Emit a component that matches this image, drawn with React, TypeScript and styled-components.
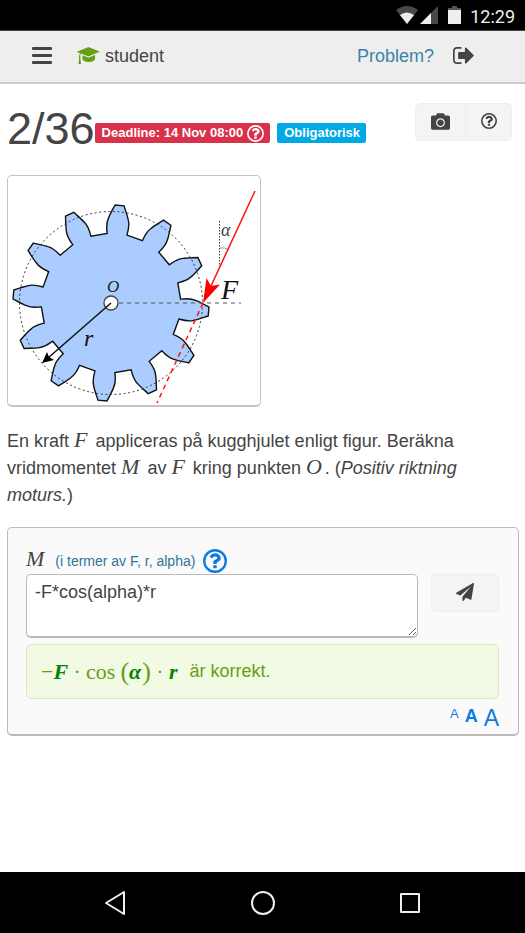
import React from "react";
import styled, { createGlobalStyle } from "styled-components";
import { FaCamera } from "react-icons/fa";

const GlobalStyle = createGlobalStyle`
  *, *::before, *::after { box-sizing: border-box; }
  body {
    margin: 0;
    background: #fff;
    color: #444;
    font-family: "Liberation Sans", Arial, sans-serif;
    font-size: 18px;
    line-height: 27px;
  }
  button, textarea { font: inherit; color: inherit; }
  svg { display: block; }
`;

const Screen = styled.div`
  min-height: 100vh;
  display: flex;
  flex-direction: column;
`;

const StatusBar = styled.div`
  display: flex;
  align-items: center;
  justify-content: flex-end;
  height: 30px;
  padding: 2px 10px 0 0;
  background: #000;
  color: #eee;
  font-family: Roboto, sans-serif;
`;

const Clock = styled.time`
  margin-left: 7px;
`;

const Header = styled.header`
  display: flex;
  align-items: center;
  justify-content: space-between;
  height: 54px;
  padding: 0 51px 0 32px;
  background: #eee;
  border-top: 1px solid #444;
  border-bottom: 2px solid #ccc;
`;

const HeaderGroup = styled.div<{ $gap: number }>`
  display: flex;
  align-items: center;
  gap: ${(p) => p.$gap}px;
`;

const PlainButton = styled.button`
  display: flex;
  padding: 0;
  border: 0;
  background: none;
  color: #444;
  cursor: pointer;
`;

const User = styled.span`
  display: flex;
  align-items: center;
  gap: 5px;
`;

const Link = styled.a`
  color: #3a84a8;
  text-decoration: none;
`;

const Main = styled.main`
  flex: 1;
  padding: 18px 6px 24px 7px;
`;

const TitleRow = styled.div`
  display: flex;
  align-items: flex-start;
  height: 56px;
  padding-right: 7px;
`;

const Counter = styled.h1`
  margin: 0;
  font-size: 45px;
  line-height: 54px;
  font-weight: 400;
`;

const Badge = styled.span<{ $color: string }>`
  display: flex;
  align-items: center;
  gap: 4px;
  height: 20px;
  margin: 21px 7px 0 0;
  padding: 0 6px 0 7px;
  border-radius: 2px;
  background: ${(p) => p.$color};
  color: #fff;
  font-size: 13px;
  font-weight: 700;
  line-height: 20px;
  white-space: nowrap;
`;

const ButtonGroup = styled.div`
  display: flex;
  margin: 1px 0 0 auto;
`;

const Button = styled.button<{ $width: number; $side?: "left" | "right" }>`
  display: flex;
  align-items: center;
  justify-content: center;
  width: ${(p) => p.$width}px;
  height: 38px;
  padding: 0 0 2px;
  border: 1px solid #eee;
  border-radius: ${(p) =>
    p.$side === "left" ? "5px 0 0 5px" : p.$side === "right" ? "0 5px 5px 0" : "5px"};
  border-left-width: ${(p) => (p.$side === "right" ? 0 : 1)}px;
  background: #f4f4f4;
  color: #444;
  cursor: pointer;
`;

const Figure = styled.figure`
  width: fit-content;
  margin: 17px 0 21px;
  border: 1px solid #c4c4c4;
  border-bottom-width: 2px;
  border-radius: 5px;
  overflow: hidden;
`;

const Question = styled.p`
  margin: 0 0 18px;
`;

const MathText = styled.i`
  display: inline-block;
  font-family: "Liberation Serif", "Times New Roman", serif;
  font-size: 22px;
  line-height: 20px;
  padding-right: 3px;
`;

const Answer = styled.form`
  padding: 20px 19px 5px 18px;
  border: 1px solid #bbb;
  border-bottom-width: 2px;
  border-radius: 5px;
  background: #fafafa;
`;

const AnswerLabel = styled.div`
  display: flex;
  align-items: center;
  gap: 8px;
  height: 26px;
`;

const Hint = styled.label`
  display: flex;
  align-items: baseline;
  gap: 8px;
  color: #2f7597;
  font-size: 14px;
`;

const Symbol = styled(MathText)`
  color: #444;
`;

const HelpButton = styled(PlainButton)`
  color: #0a7be0;
`;

const InputRow = styled.div`
  display: flex;
  align-items: flex-start;
  gap: 13px;
`;

const Input = styled.textarea`
  flex: 1;
  min-width: 0;
  height: 64px;
  padding: 4px 8px;
  border: 1px solid #bbb;
  border-bottom-width: 2px;
  border-radius: 5px;
  outline: 0;
  background: #fff;
  resize: vertical;
`;

const Result = styled.div`
  display: flex;
  align-items: center;
  height: 55px;
  margin-top: 6px;
  padding: 0 14px;
  border: 1px solid #dcebbf;
  border-radius: 5px;
  background: #f2fae3;
  color: #659f13;
`;

const Formula = styled.span`
  display: flex;
  align-items: center;
  margin-right: 12px;
  font-family: "Liberation Serif", "Times New Roman", serif;
  font-size: 22px;
  line-height: 28px;
`;

const Variable = styled.i`
  color: #078307;
  font-weight: 700;
`;

const Dot = styled.span`
  width: 18px;
  text-align: center;
`;

const Paren = styled.span`
  margin-left: 1px;
  font-size: 26px;
`;

const Cos = styled.span`
  margin-right: 4px;
`;

const Sizes = styled.div`
  display: flex;
  align-items: flex-start;
  justify-content: flex-end;
  gap: 6px;
  height: 30px;
  padding-top: 8px;
`;

const SizeButton = styled(PlainButton)<{ $size: number; $bold?: boolean }>`
  color: #0a7be0;
  font-size: ${(p) => p.$size}px;
  font-weight: ${(p) => (p.$bold ? 700 : 400)};
  line-height: 1;
`;

const NavBar = styled.nav`
  display: flex;
  align-items: center;
  justify-content: space-between;
  height: 61px;
  padding: 0 104px;
  background: #000;
`;

function QuestionIcon({ size }: { size: number }) {
  return (
    <svg width={size} height={size} viewBox="128 128 1536 1536" fill="currentColor">
      <circle cx="896" cy="896" r="690" fill="none" stroke="currentColor" strokeWidth="150" />
      <path d="M1008 1200v128q0 14-9 23t-23 9h-160q-14 0-23-9t-9-23v-128q0-14 9-23t23-9h160q14 0 23 9t9 23zm256-496q0 50-15 90t-45.500 69-52 44-59.500 36q-32 18-46.500 28t-26 24-11.500 29v32q0 14-9 23t-23 9h-160q-14 0-23-9t-9-23v-68q0-35 10.500-64.500t24-47.500 39-35.500 41-25.500 44.500-21q53-25 75-43t22-49q0-42-43.500-71.500t-95.500-29.500q-56 0-95 27-29 20-80 83-9 12-25 12-11 0-19-6l-108-82q-10-7-12-20t5-23q122-192 349-192 129 0 238.500 89.500t109.500 214.500z" />
    </svg>
  );
}

const CENTER = { x: 103, y: 127 };
const TEETH = 12;

function gearPath() {
  let d = "";
  for (let i = 0; i < TEETH; i++) {
    const a = ((5 + i * 30) * Math.PI) / 180;
    const at = (x: number, y: number) =>
      `${(CENTER.x + x * Math.cos(a) - y * Math.sin(a)).toFixed(1)} ${(
        CENTER.y + x * Math.sin(a) + y * Math.cos(a)
      ).toFixed(1)}`;
    d += `${i ? "L" : "M"}${at(-10, -69)}C${at(-11, -74)} ${at(-12, -79)} ${at(-10, -84)}`;
    d += `C${at(-9, -88)} ${at(-7, -92)} ${at(-4.5, -98)}L${at(4.5, -98)}`;
    d += `C${at(7, -92)} ${at(9, -88)} ${at(10, -84)}C${at(12, -79)} ${at(11, -74)} ${at(10, -69)}`;
  }
  return d + "Z";
}

function GearDrawing() {
  return (
    <svg
      width="252"
      height="229"
      viewBox="0 0 252 229"
      role="img"
      aria-label="Kugghjul"
      fontFamily="Liberation Serif, serif"
      fontStyle="italic"
    >
      <path d={gearPath()} fill="#aaccff" stroke="#111" strokeWidth="1.4" />
      <circle cx="103" cy="127" r="91.5" fill="none" stroke="#333" strokeDasharray="2 2.6" />
      <path d="M111 127H233" stroke="#555" strokeDasharray="4 4" />
      <path d="M211.5 45V93" stroke="#333" strokeDasharray="1.5 1.5" />
      <path d="M212 72Q217 71 221 74" stroke="#999" fill="none" />
      <circle cx="103" cy="127" r="7" fill="#fff" stroke="#444" strokeWidth="1.3" />
      <path d="M103 127L40 182" stroke="#111" strokeWidth="1.5" />
      <path d="M34 187L39 176L41 181L46 184Z" fill="#000" />
      <path d="M195 127L149 227" stroke="#f11" strokeWidth="1.5" strokeDasharray="5 4" />
      <path d="M247 15L203 110" stroke="#f11" strokeWidth="1.5" />
      <path d="M195 127L198.500 102L203 110L212 108.500Z" fill="#f00" />
      <text x="99" y="116" fontSize="17" fill="#222">O</text>
      <text x="76" y="170" fontSize="24" fill="#111">r</text>
      <text x="213" y="60" fontSize="18" fill="#444">α</text>
      <text x="213" y="123" fontSize="28" fill="#111">F</text>
    </svg>
  );
}

export default function App() {
  return (
    <Screen>
      <GlobalStyle />
      <StatusBar>
        <svg width="67" height="22" viewBox="0 1 67 22" aria-hidden="true">
          <path d="M0 6Q11 -2 22 6L11 20Z" fill="#484848" />
          <path d="M4 11Q11 6 18 11L11 20Z" fill="#eee" />
          <path d="M42 2V20H24Z" fill="#484848" />
          <path d="M35 9V20H24Z" fill="#eee" />
          <path d="M52 4H56V2H61V4H65V8H52Z" fill="#555" />
          <path d="M52 6H65V20H52Z" fill="#eee" />
        </svg>
        <Clock>12:29</Clock>
      </StatusBar>

      <Header>
        <HeaderGroup $gap={25}>
          <PlainButton type="button" aria-label="Meny">
            <svg width="20" height="20" viewBox="0 0 20 20" fill="currentColor">
              <rect width="20" height="3" rx="1" y="0" />
              <rect width="20" height="3" rx="1" y="7" />
              <rect width="20" height="3" rx="1" y="14" />
            </svg>
          </PlainButton>
          <User>
            <svg width="23" height="19" viewBox="0 0 23 19" fill="#659f13" aria-hidden="true">
              <path d="M0 5Q0 4.500 1 4.200L11 0.300Q11.500 0 12 0.300L22 4.200Q23 4.600 22 5L12 9.200Q11.500 9.400 11 9.200L4 6.500Q3.200 7.500 3.100 9Q4 10 3.300 11L4 17H1.500L2.200 11Q1.500 10 2.200 9Q2.300 7 3 6L1 5.500Z" />
              <path d="M5.500 8.300L10.500 10.300Q11.500 10.700 12.500 10.300L18 8V12.500Q16 15 11.700 15Q7.500 15 5.500 12.500Z" />
            </svg>
            student
          </User>
        </HeaderGroup>
        <HeaderGroup $gap={19}>
          <Link href="#problem">Problem?</Link>
          <PlainButton type="button" aria-label="Logga ut">
            <svg width="21" height="19" viewBox="0 256 1580 1430" fill="currentColor">
              <path d="M640 1440q0 4 1 20t.5 26.500-3 23.500-10 19.500-20.500 6.500h-320q-119 0-203.500-84.500t-84.500-203.500v-704q0-119 84.500-203.500t203.500-84.500h320q13 0 22.500 9.500t9.500 22.500q0 4 1 20t.5 26.500-3 23.500-10 19.500-20.500 6.500h-320q-66 0-113 47t-47 113v704q0 66 47 113t113 47h312l11.500 1 11.500 3 8 5.500 7 9 2 13.500zm928-544q0 26-19 45l-544 544q-19 19-45 19t-45-19-19-45v-288h-448q-26 0-45-19t-19-45v-384q0-26 19-45t45-19h448v-288q0-26 19-45t45-19 45 19l544 544q19 19 19 45z" />
            </svg>
          </PlainButton>
        </HeaderGroup>
      </Header>

      <Main>
        <TitleRow>
          <Counter>2/36</Counter>
          <Badge $color="#da314b">
            Deadline: 14 Nov 08:00 <QuestionIcon size={17} />
          </Badge>
          <Badge $color="#00a8e6">Obligatorisk</Badge>
          <ButtonGroup>
            <Button type="button" $width={51} $side="left" aria-label="Kamera">
              <FaCamera size={19} />
            </Button>
            <Button type="button" $width={46} $side="right" aria-label="Hjälp">
              <QuestionIcon size={16} />
            </Button>
          </ButtonGroup>
        </TitleRow>

        <Figure>
          <GearDrawing />
        </Figure>

        <Question>
          En kraft <MathText>F</MathText> appliceras på kugghjulet enligt figur. Beräkna
          vridmomentet <MathText>M</MathText> av <MathText>F</MathText> kring punkten{" "}
          <MathText>O</MathText>. (<em>Positiv riktning moturs.</em>)
        </Question>

        <Answer onSubmit={(e) => e.preventDefault()}>
          <AnswerLabel>
            <Hint htmlFor="answer">
              <Symbol>M</Symbol>(i termer av F, r, alpha)
            </Hint>
            <HelpButton type="button" aria-label="Hjälp om svaret">
              <QuestionIcon size={24} />
            </HelpButton>
          </AnswerLabel>
          <InputRow>
            <Input id="answer" defaultValue="-F*cos(alpha)*r" />
            <Button type="submit" $width={68} aria-label="Skicka">
              <svg width="18" height="18" viewBox="0 0 1792 1792" fill="currentColor">
                <path d="M1764 11q33 24 27 64l-256 1536q-5 29-32 45-14 8-31 8-11 0-24-5l-453-185-242 295q-18 23-49 23-13 0-22-4-19-7-30.500-23.500t-11.500-36.500v-349l864-1059-1069 925-395-162q-37-14-40-55-2-40 32-59l1664-960q15-9 32-9 20 0 36 11z" />
              </svg>
            </Button>
          </InputRow>
          <Result role="status">
            <Formula>
              <span>−</span>
              <Variable>F</Variable>
              <Dot>·</Dot>
              <Cos>cos</Cos>
              <Paren>(</Paren>
              <Variable>α</Variable>
              <Paren>)</Paren>
              <Dot>·</Dot>
              <Variable>r</Variable>
            </Formula>
            är korrekt.
          </Result>
          <Sizes>
            <SizeButton type="button" $size={13} aria-label="Liten text">A</SizeButton>
            <SizeButton type="button" $size={18} $bold aria-label="Normal text">A</SizeButton>
            <SizeButton type="button" $size={23} aria-label="Stor text">A</SizeButton>
          </Sizes>
        </Answer>
      </Main>

      <NavBar aria-label="System">
        <PlainButton type="button" aria-label="Tillbaka">
          <svg width="22" height="26" viewBox="0 0 22 26" fill="none" stroke="#eee" strokeWidth="2" strokeLinejoin="round">
            <path d="M20 2V24L2 13Z" />
          </svg>
        </PlainButton>
        <PlainButton type="button" aria-label="Hem">
          <svg width="26" height="26" viewBox="0 0 26 26" fill="none" stroke="#eee" strokeWidth="2">
            <circle cx="13" cy="13" r="11" />
          </svg>
        </PlainButton>
        <PlainButton type="button" aria-label="Översikt">
          <svg width="22" height="22" viewBox="0 0 22 22" fill="none" stroke="#eee" strokeWidth="2" strokeLinejoin="round">
            <rect x="2" y="2" width="18" height="18" />
          </svg>
        </PlainButton>
      </NavBar>
    </Screen>
  );
}
